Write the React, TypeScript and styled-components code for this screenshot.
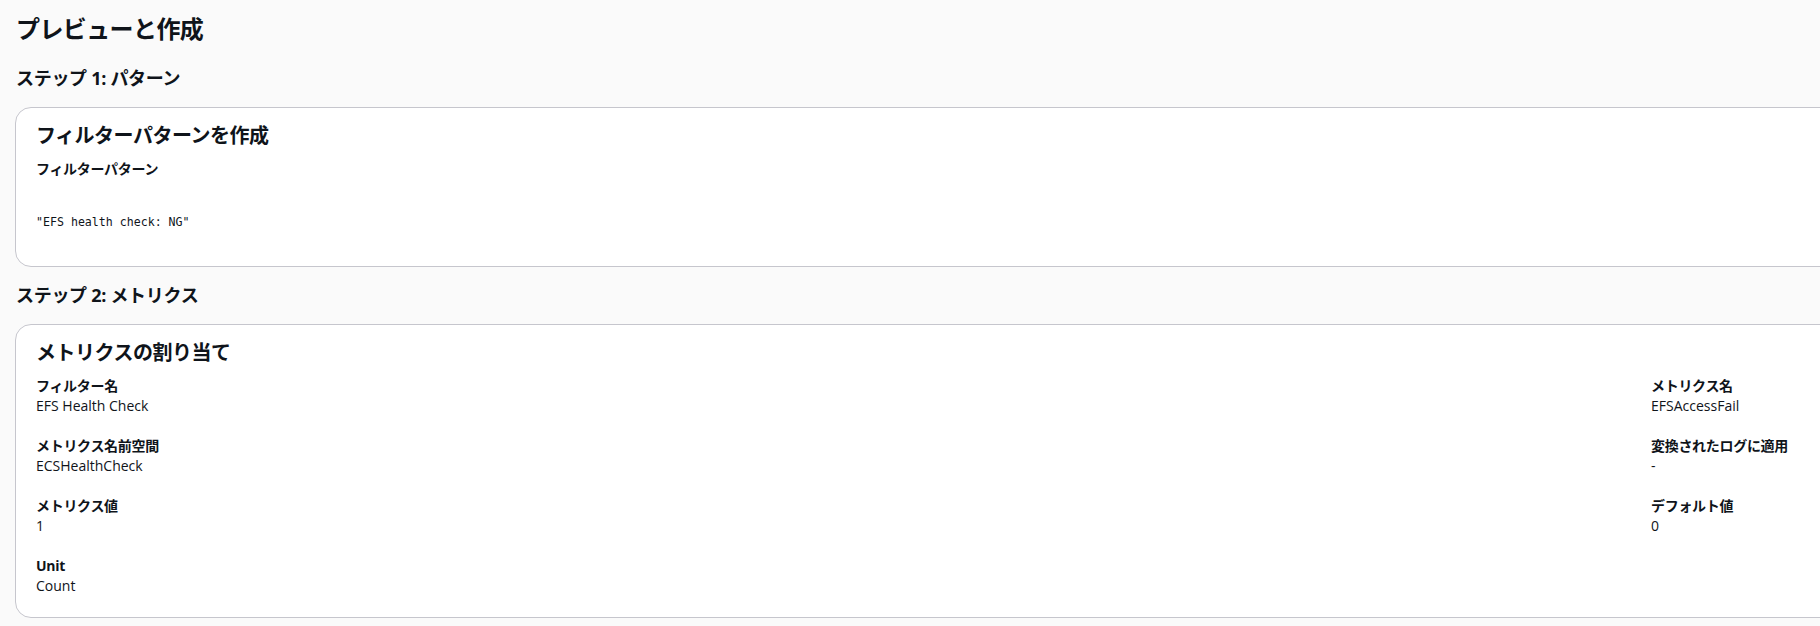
import * as React from 'react';
import styled, { createGlobalStyle } from 'styled-components';

const GlobalStyle = createGlobalStyle`
  html, body {
    margin: 0;
    padding: 0;
    overflow: hidden;
    background: #fafafa;
  }
  body {
    font-family: "Open Sans", "Noto Sans CJK JP", sans-serif;
    color: #0f141a;
  }
`;

const metrics = [
  [
    { label: 'フィルター名', value: 'EFS Health Check' },
    { label: 'メトリクス名前空間', value: 'ECSHealthCheck' },
    { label: 'メトリクス値', value: '1' },
    { label: 'Unit', value: 'Count' },
  ],
  [
    { label: 'メトリクス名', value: 'EFSAccessFail' },
    { label: '変換されたログに適用', value: '-' },
    { label: 'デフォルト値', value: '0' },
  ],
];

const App = () => (
  <Page>
    <GlobalStyle />
    <PageTitle>プレビューと作成</PageTitle>

    <StepTitle $top={23}>ステップ 1: パターン</StepTitle>
    <Card>
      <CardTitle>フィルターパターンを作成</CardTitle>
      <Label>フィルターパターン</Label>
      <Code>"EFS health check: NG"</Code>
    </Card>

    <StepTitle $top={17}>ステップ 2: メトリクス</StepTitle>
    <Card>
      <CardTitle>メトリクスの割り当て</CardTitle>
      <Columns>
        {metrics.map((column, i) => (
          <Column key={i}>
            {column.map(pair => (
              <Pair key={pair.label}>
                <Label>{pair.label}</Label>
                <Value>{pair.value}</Value>
              </Pair>
            ))}
          </Column>
        ))}
      </Columns>
    </Card>
  </Page>
);

const Page = styled.div`
  width: 3252px;
  padding: 14px 0 0 15px;
  display: flex;
  flex-direction: column;
`;

const PageTitle = styled.h1`
  margin: 0 0 0 1px;
  font-size: 24px;
  line-height: 30px;
  font-weight: 700;
  letter-spacing: -0.6px;
`;

const StepTitle = styled.h2<{ $top: number }>`
  margin: ${p => p.$top}px 0 18px 1px;
  font-size: 18px;
  line-height: 22px;
  font-weight: 700;
  letter-spacing: -0.3px;
`;

const Card = styled.div`
  box-sizing: border-box;
  width: 100%;
  background: #fff;
  border: 1px solid #c6c6cd;
  border-radius: 16px;
  padding: 16px 20px 21px;
  display: flex;
  flex-direction: column;
`;

const CardTitle = styled.div`
  font-size: 20px;
  line-height: 24px;
  font-weight: 700;
  letter-spacing: -0.5px;
  margin-bottom: 11px;
`;

const Label = styled.div`
  font-size: 14px;
  line-height: 20px;
  font-weight: 700;
  letter-spacing: -0.3px;
`;

const Code = styled.div`
  margin-top: 35px;
  font-family: "DejaVu Sans Mono", "Liberation Mono", monospace;
  font-size: 11.6px;
  line-height: 16px;
  padding-bottom: 15px;
`;

const Columns = styled.div`
  display: grid;
  grid-template-columns: 1fr 1fr;
  column-gap: 20px;
`;

const Column = styled.div`
  display: flex;
  flex-direction: column;
  gap: 20px;
`;

const Pair = styled.div`
  display: flex;
  flex-direction: column;
`;

const Value = styled.div`
  font-size: 14px;
  line-height: 20px;
`;

export default App;
